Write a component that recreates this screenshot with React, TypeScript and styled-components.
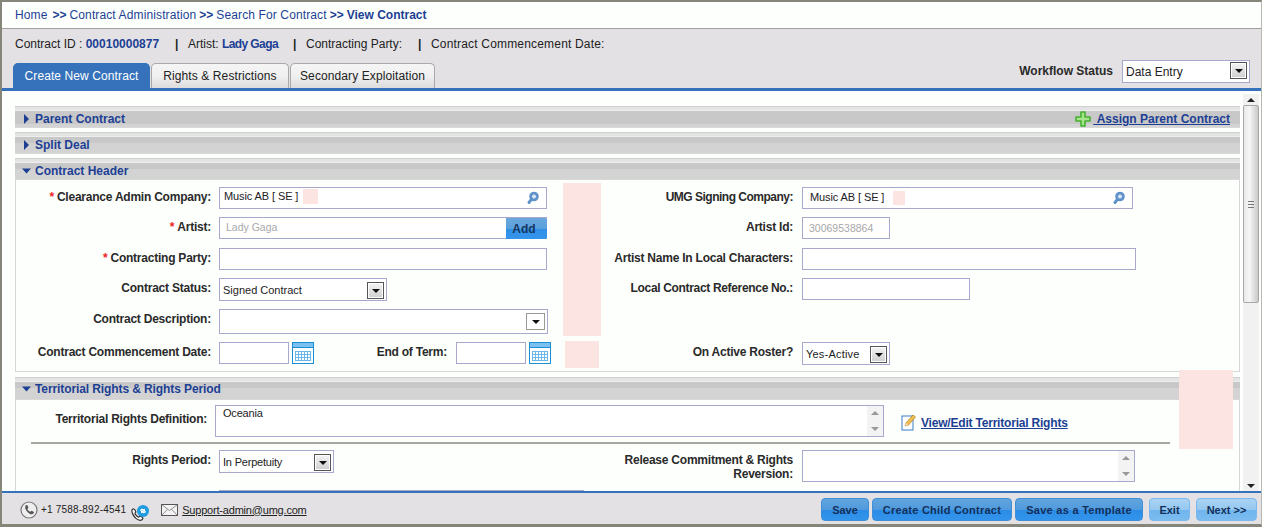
import React from "react";
import styled, { createGlobalStyle } from "styled-components";

const Global = createGlobalStyle`
  html, body { margin: 0; padding: 0; background: #fff; }
  * { box-sizing: border-box; }
  body { font-family: "Liberation Sans", Arial, sans-serif; font-size: 12px; color: #222; }
`;

const Frame = styled.div`
  position: relative;
  width: 1262px;
  height: 527px;
  display: flex;
  flex-direction: column;
  overflow: hidden;
  border-top: 2px solid #85857a;
  border-left: 2px solid #85857a;
  border-bottom: 3px solid #85857a;
  border-right: 1px solid #b8b8b0;
`;

const Breadcrumb = styled.nav`
  height: 27px;
  flex: none;
  padding: 0 0 1px 13px;
  display: flex;
  align-items: center;
  gap: 3px;
  background: #fdfffd;
  border-bottom: 1px solid #a0a0a0;
  color: #1c3f94;
  font-size: 12px;
`;

const Crumb = styled.span<{ $pr?: number }>`
  letter-spacing: 0.12px;
  padding-right: ${(p) => p.$pr ?? 0}px;
`;

const Sep = styled.b`
  font-weight: 700;
`;

const Summary = styled.div`
  flex: none;
  height: 59px;
  background: #e3e1e4;
  display: flex;
  flex-direction: column;
`;

const InfoLine = styled.div`
  height: 30px;
  flex: none;
  padding-left: 13px;
  display: flex;
  align-items: center;
  font-size: 12px;
  color: #222;
`;

const InfoItem = styled.span<{ $w: number; $ls?: number }>`
  width: ${(p) => p.$w}px;
  white-space: nowrap;
  letter-spacing: ${(p) => p.$ls ?? 0}px;
`;

const Pipe = styled.b`
  display: inline-block;
  width: 13px;
  font-weight: 700;
`;

const Strong = styled.b<{ $ls?: number }>`
  color: #1c3f94;
  font-weight: 700;
  letter-spacing: ${(p) => p.$ls ?? 0}px;
`;

const TabRow = styled.div`
  flex: 1;
  padding-left: 11px;
  display: flex;
  align-items: flex-end;
  justify-content: space-between;
`;

const Tabs = styled.div`
  display: flex;
  gap: 1px;
`;

const Tab = styled.div<{ $active?: boolean; $w: number }>`
  width: ${(p) => p.$w}px;
  height: 25px;
  border-radius: 5px 5px 0 0;
  display: flex;
  align-items: center;
  justify-content: center;
  font-size: 12px;
  letter-spacing: 0.1px;
  color: ${(p) => (p.$active ? "#fff" : "#222")};
  background: ${(p) =>
    p.$active ? "#3572bb" : "linear-gradient(#f5f5f5 0, #f0f0f0 50%, #dcdcdc 100%)"};
  border: 1px solid ${(p) => (p.$active ? "#3572bb" : "#a9a9a9")};
  border-bottom: none;
`;

const Workflow = styled.div`
  display: flex;
  align-items: flex-start;
  gap: 9px;
  height: 28px;
  margin-right: 11px;
  color: #2a2a2a;
`;

const WorkflowLabel = styled.span`
  line-height: 22px;
  font-weight: 700;
`;

const Stage = styled.div`
  flex: 1;
  min-height: 0;
  display: flex;
  border-top: 3px solid #3572bb;
  background: #fdfffd;
`;

const Scroller = styled.div`
  flex: 1;
  min-width: 0;
  overflow: hidden;
  padding: 15px 0 0 13px;
`;

const Section = styled.section<{ $mb?: number }>`
  margin-bottom: ${(p) => p.$mb ?? 4}px;
`;

const SectionHead = styled.div<{ $h?: number; $dark?: number; $pt?: number }>`
  height: ${(p) => p.$h ?? 22}px;
  padding: ${(p) => p.$pt ?? 4}px 10px 0 7px;
  display: flex;
  align-items: center;
  justify-content: space-between;
  color: #1c3f94;
  font-weight: 700;
  font-size: 12px;
  border-top: 1px solid #cfcfcf;
  border-bottom: 1px solid #d8d8d8;
  background: linear-gradient(
    #e4e4e4 0,
    #e4e4e4 3px,
    #eeeeee 3px,
    #eeeeee 4px,
    #c8c8c8 4px,
    #c8c8c8 ${(p) => p.$dark ?? 10}px,
    #d3d3d3 ${(p) => p.$dark ?? 10}px,
    #d3d3d3 100%
  );
`;

const HeadTitle = styled.span<{ $ls?: number }>`
  display: flex;
  align-items: center;
  gap: 4px;
  letter-spacing: ${(p) => p.$ls ?? 0}px;
`;

const HeadLink = styled.a`
  display: flex;
  align-items: center;
  gap: 2px;
  color: #1c3f94;
  font-weight: 700;
`;

const LinkText = styled.span`
  text-decoration: underline;
`;

const SectionBody = styled.div<{ $h?: number; $pt?: number }>`
  border-left: 1px solid #d6d6d6;
  border-right: 1px solid #d6d6d6;
  border-bottom: 1px solid #d6d6d6;
  padding-top: ${(p) => p.$pt ?? 7}px;
  display: flex;
  flex-direction: column;
  gap: 8px;
  ${(p) => (p.$h ? `height: ${p.$h}px;` : "")}
`;

const Row = styled.div<{ $h: number }>`
  display: grid;
  grid-template-columns: 564px 1fr;
  height: ${(p) => p.$h}px;
`;

const Field = styled.div<{ $gap?: number }>`
  display: flex;
  align-items: flex-start;
  gap: ${(p) => p.$gap ?? 8}px;
`;

const Label = styled.label<{ $w: number; $top?: number; $ls?: number }>`
  flex: none;
  width: ${(p) => p.$w}px;
  margin-top: ${(p) => p.$top ?? 0}px;
  text-align: right;
  font-weight: 700;
  font-size: 12px;
  letter-spacing: ${(p) => p.$ls ?? -0.23}px;
  line-height: 20px;
  color: #2a2a2a;
  white-space: nowrap;
`;

const Wrapped = styled(Label)`
  white-space: normal;
  line-height: 14px;
  padding-top: 3px;
`;

const Req = styled.span`
  color: #e22;
  margin-right: 3px;
`;

const Box = styled.div<{ $w: number; $h?: number; $fs?: number }>`
  position: relative;
  flex: none;
  width: ${(p) => p.$w}px;
  height: ${(p) => p.$h ?? 22}px;
  border: 1px solid #a8a8cc;
  background: #fff;
  display: flex;
  align-items: center;
  padding-left: 3px;
  font-size: ${(p) => p.$fs ?? 11}px;
  color: #222;
`;

const Muted = styled.span<{ $lift?: number }>`
  color: #a8a8a8;
  font-size: 10.500px;
  padding-left: 3px;
  margin-top: ${(p) => p.$lift ?? 0}px;
`;

const ValueText = styled.span<{ $pad?: number; $lift?: number; $ls?: number }>`
  padding-left: ${(p) => p.$pad ?? 0}px;
  margin-top: ${(p) => p.$lift ?? 0}px;
  letter-spacing: ${(p) => p.$ls ?? 0}px;
  white-space: nowrap;
`;

const TopText = styled.span`
  align-self: flex-start;
  padding: 1px 0 0 4px;
  letter-spacing: -0.2px;
`;

const LookupIcon = styled.svg`
  position: absolute;
  right: 6px;
  top: 3px;
`;

const AddBtn = styled.span`
  position: absolute;
  right: -1px;
  top: 0;
  bottom: -1px;
  width: 41px;
  padding-right: 5px;
  display: flex;
  align-items: center;
  justify-content: center;
  color: #14365f;
  font-weight: 700;
  font-size: 12px;
  border-radius: 0 2px 2px 0;
  background: linear-gradient(#6aa7dc 0, #5aa0de 50%, #2f90e6 52%, #3595ec 100%);
`;

const ArrowBtn = styled.span<{ $top?: number; $w?: number }>`
  position: absolute;
  right: 2px;
  top: ${(p) => p.$top ?? 3}px;
  width: ${(p) => p.$w ?? 17}px;
  height: 17px;
  border: 1px solid #555;
  box-shadow: inset 0 0 0 1px #fff;
  background: linear-gradient(#f4f4f4, #cfcfcf);
  display: flex;
  align-items: center;
  justify-content: center;
  &::after {
    content: "";
    border-left: 4px solid transparent;
    border-right: 4px solid transparent;
    border-top: 4px solid #111;
  }
`;

const PlainArrow = styled(ArrowBtn)`
  border-color: #999;
  background: #fff;
`;

const DateGroup = styled.div<{ $ml?: number }>`
  display: flex;
  gap: 3px;
  margin-left: ${(p) => p.$ml ?? 0}px;
`;

const TextBoxScroll = styled.span`
  position: absolute;
  top: 0;
  bottom: 0;
  right: 0;
  width: 16px;
  background: #f3f3f3;
  display: flex;
  flex-direction: column;
  justify-content: space-between;
  align-items: center;
  padding: 5px 0;
`;

const Tri = styled.i<{ $up?: boolean; $c?: string }>`
  display: block;
  width: 0;
  height: 0;
  border-left: 4px solid transparent;
  border-right: 4px solid transparent;
  ${(p) =>
    p.$up ? `border-bottom: 4px solid ${p.$c ?? "#999"};` : `border-top: 4px solid ${p.$c ?? "#999"};`}
`;

const TerritoryRow = styled.div`
  display: flex;
  align-items: flex-start;
  height: 32px;
`;

const EditLink = styled.a`
  margin-left: 17px;
  margin-top: 9px;
  display: flex;
  align-items: center;
  gap: 4px;
  font-size: 12px;
  letter-spacing: -0.2px;
  font-weight: 700;
  color: #1c3f94;
  text-decoration: underline;
`;

const Divider = styled.hr`
  height: 2px;
  margin: -3px 69px -2px 15px;
  border: none;
  background: #a8a8a0;
  flex: none;
`;

const ClippedField = styled.div`
  margin-left: 203px;
  width: 365px;
  height: 24px;
  flex: none;
  border: 1px solid #a8a8cc;
`;

const ScrollTrack = styled.aside`
  flex: none;
  width: 16px;
  margin: 3px 2px 0 3px;
  background: #f1f1f1;
  display: flex;
  flex-direction: column;
  align-items: center;
`;

const ScrollCap = styled.div`
  height: 11px;
  flex: none;
  display: flex;
  align-items: center;
  justify-content: center;
`;

const Thumb = styled.div`
  width: 16px;
  height: 198px;
  flex: none;
  border: 1px solid #a8a8a8;
  border-radius: 2px;
  background: linear-gradient(90deg, #e8e8e8, #f6f6f6 40%, #c9c9c9);
  display: flex;
  align-items: center;
  justify-content: center;
`;

const Grip = styled.div`
  width: 6px;
  height: 7px;
  border-top: 1px solid #777;
  border-bottom: 1px solid #777;
  position: relative;
  &::after {
    content: "";
    position: absolute;
    left: 0;
    right: 0;
    top: 2px;
    height: 1px;
    background: #777;
  }
`;

const Spacer = styled.div`
  flex: 1;
`;

const Footer = styled.footer`
  flex: none;
  height: 33px;
  border-top: 2px solid #3572bb;
  background: #e3e1e4;
  display: flex;
  align-items: center;
  justify-content: space-between;
  padding: 2px 4px 0 18px;
`;

const Contact = styled.div`
  display: flex;
  align-items: center;
  font-size: 10px;
  color: #222;
`;

const Phone = styled.span`
  margin: 0 5px 0 3px;
  letter-spacing: 0.2px;
`;

const MailGap = styled.span`
  width: 10px;
`;

const Mail = styled.a`
  margin-left: 4px;
  color: #222;
  text-decoration: underline;
  font-size: 11px;
  letter-spacing: -0.2px;
`;

const Actions = styled.div`
  display: flex;
  gap: 3px;
`;

const ActionBtn = styled.button<{ $w: number; $light?: boolean; $ml?: number; $ls?: number }>`
  width: ${(p) => p.$w}px;
  height: 23px;
  margin-left: ${(p) => p.$ml ?? 0}px;
  padding: 0;
  border-radius: 4px;
  border: 1px solid ${(p) => (p.$light ? "#7ab8ee" : "#3f8ed8")};
  background: ${(p) =>
    p.$light
      ? "linear-gradient(#a9d3f3 0, #96c8f0 50%, #6fb5ee 52%, #7bbcf0 100%)"
      : "linear-gradient(#62a5dd 0, #4f9ade 50%, #2b8ce6 52%, #3394ec 100%)"};
  color: #14305a;
  font: 700 11px "Liberation Sans", Arial, sans-serif;
  letter-spacing: ${(p) => p.$ls ?? 0}px;
`;

const Patch = styled.div<{ $x: number; $y: number; $w: number; $h: number }>`
  position: absolute;
  left: ${(p) => p.$x}px;
  top: ${(p) => p.$y}px;
  width: ${(p) => p.$w}px;
  height: ${(p) => p.$h}px;
  background: #fbe4e2;
`;

const Caret = ({ open }: { open?: boolean }) => (
  <svg width="9" height="10" viewBox="0 0 9 10" aria-hidden>
    {open ? <path d="M0 2.500h9L4.500 7.500z" fill="#1c3f94" /> : <path d="M2 0l5 5-5 5z" fill="#1c3f94" />}
  </svg>
);

const Lens = () => (
  <LookupIcon width="14" height="14" viewBox="0 0 14 14" aria-hidden>
    <circle cx="8" cy="5.500" r="3.400" fill="#dbe8f6" stroke="#5f93c9" strokeWidth="2.800" />
    <path d="M5.200 8.600L3 11.500" stroke="#5f93c9" strokeWidth="3" strokeLinecap="round" />
  </LookupIcon>
);

const Calendar = () => (
  <svg width="22" height="22" viewBox="0 0 22 22" aria-hidden>
    <rect x=".5" y=".5" width="21" height="21" fill="#fff" stroke="#1b8fd6" />
    <rect x="1" y="1" width="20" height="4" fill="#7cc0f0" />
    <rect x="1" y="5" width="20" height="1" fill="#1b8fd6" />
    <g fill="#fff" stroke="#6ab6e8" strokeWidth="1">
      {[0, 1, 2].map((r) =>
        [0, 1, 2, 3, 4].map((c) => (
          <rect key={`${r}-${c}`} x={3.5 + c * 3} y={9.5 + r * 3} width="3" height="3" />
        ))
      )}
    </g>
  </svg>
);

const Plus = () => (
  <svg width="16" height="16" viewBox="0 0 16 16" aria-hidden>
    <path
      d="M6 1h4v5h5v4h-5v5H6v-5H1V6h5z"
      fill="#a6e58c"
      stroke="#45b030"
      strokeWidth="1.600"
      strokeLinejoin="round"
    />
  </svg>
);

const EditIcon = () => (
  <svg width="16" height="17" viewBox="0 0 16 17" aria-hidden>
    <rect x="1" y="2" width="11" height="14" fill="#fff" stroke="#3a7cc4" />
    <path d="M4 12l1-3 7-8 2.500 2-7 8z" fill="#f1c04e" stroke="#b5812a" strokeWidth=".8" />
    <path d="M4 12l1-3 2.400 2z" fill="#f6e0b0" />
  </svg>
);

const PhoneIcon = () => (
  <svg width="18" height="18" viewBox="0 0 18 18" aria-hidden>
    <circle cx="9" cy="9" r="8" fill="#eee" stroke="#777" strokeWidth="1.200" />
    <path
      d="M5.500 4.500c1-.8 1.800-.5 2.200.3l.6 1.400c.2.500 0 1-.5 1.300-.3.200-.4.500-.2.900.5 1 1.200 1.700 2.100 2.200.4.200.7.100.9-.2.300-.5.800-.7 1.300-.5l1.300.7c.8.400 1 1.200.2 2-1.200 1.200-3.100.8-5.100-.9-2.400-2.100-3.900-5-2.800-6.200z"
      fill="#555"
    />
  </svg>
);

const SyncIcon = () => (
  <svg width="20" height="24" viewBox="0 0 20 24" aria-hidden>
    <path
      transform="translate(-1 5) scale(1.100)"
      d="M2 6c1.200-1 2-.6 2.500.3l.7 1.500c.2.500 0 1-.5 1.300-.3.300-.3.600 0 1 .8 1.200 1.600 2 2.700 2.600.4.200.7.100 1-.3.400-.5.900-.6 1.400-.3l1.300.8c.8.500.8 1.300 0 2.100-1.400 1.300-3.600.8-5.700-1C3 11.700 1 8 2 6z"
      fill="#fff"
      stroke="#333"
      strokeWidth="1.100"
    />
    <g transform="translate(0 6)">
      <circle cx="12" cy="7" r="6" fill="#1f9be0" />
      <path
        d="M9 6.500c.4-1.600 2.600-2.400 4-1l1-1v3h-3l1-1c-.8-.7-1.900-.4-2.200.4zM15 7.500c-.4 1.600-2.600 2.400-4 1l-1 1v-3h3l-1 1c.8.700 1.900.4 2.200-.4z"
        fill="#fff"
      />
    </g>
  </svg>
);

const MailIcon = () => (
  <svg width="17" height="12" viewBox="0 0 17 12" aria-hidden>
    <rect x=".5" y=".5" width="16" height="11" fill="#f3f3f3" stroke="#555" />
    <path d="M.5.500l8 6 8-6M.5 11.500l6-6.300M16.500 11.500l-6-6.300" fill="none" stroke="#777" strokeWidth=".8" />
  </svg>
);

const Select = ({
  w,
  h = 23,
  text,
  top,
  fs,
  ls,
}: {
  w: number;
  h?: number;
  text: string;
  top?: number;
  fs?: number;
  ls?: number;
}) => (
  <Box $w={w} $h={h} $fs={fs}>
    <ValueText $ls={ls}>{text}</ValueText>
    <ArrowBtn $top={top} />
  </Box>
);

export default function App() {
  return (
    <Frame>
      <Global />
      <Breadcrumb>
        <Crumb $pr={2}>Home</Crumb>
        <Sep>&gt;&gt;</Sep>
        <Crumb>Contract Administration</Crumb>
        <Sep>&gt;&gt;</Sep>
        <Crumb>Search For Contract</Crumb>
        <Sep>&gt;&gt;</Sep>
        <Strong>View Contract</Strong>
      </Breadcrumb>

      <Summary>
        <InfoLine>
          <InfoItem $w={160}>
            Contract ID : <Strong>00010000877</Strong>
          </InfoItem>
          <Pipe>|</Pipe>
          <InfoItem $w={105}>
            Artist: <Strong $ls={-0.6}>Lady Gaga</Strong>
          </InfoItem>
          <Pipe>|</Pipe>
          <InfoItem $w={112}>Contracting Party:</InfoItem>
          <Pipe>|</Pipe>
          <InfoItem $w={180} $ls={0.18}>
            Contract Commencement Date:
          </InfoItem>
        </InfoLine>
        <TabRow>
          <Tabs>
            <Tab $active $w={137}>
              Create New Contract
            </Tab>
            <Tab $w={138}>Rights &amp; Restrictions</Tab>
            <Tab $w={145}>Secondary Exploitation</Tab>
          </Tabs>
          <Workflow>
            <WorkflowLabel>Workflow Status</WorkflowLabel>
            <Select w={128} text="Data Entry" top={1} fs={12} />
          </Workflow>
        </TabRow>
      </Summary>

      <Stage>
        <Scroller>
          <Section>
            <SectionHead $dark={17}>
              <HeadTitle>
                <Caret />
                Parent Contract
              </HeadTitle>
              <HeadLink>
                <Plus />
                <LinkText>{"\u00a0Assign Parent Contract"}</LinkText>
              </HeadLink>
            </SectionHead>
          </Section>
          <Section>
            <SectionHead>
              <HeadTitle>
                <Caret />
                Split Deal
              </HeadTitle>
            </SectionHead>
          </Section>
          <Section $mb={5}>
            <SectionHead>
              <HeadTitle>
                <Caret open />
                Contract Header
              </HeadTitle>
            </SectionHead>
            <SectionBody $h={192}>
              <Row $h={22}>
                <Field>
                  <Label $w={195}>
                    <Req>*</Req>Clearance Admin Company:
                  </Label>
                  <Box $w={328}>
                    <ValueText $pad={1} $lift={-4} $ls={-0.1}>
                      Music AB [ SE ]
                    </ValueText>
                    <Lens />
                  </Box>
                </Field>
                <Field $gap={9}>
                  <Label $w={213} $ls={-0.5}>
                    UMG Signing Company:
                  </Label>
                  <Box $w={331}>
                    <ValueText $pad={4} $lift={-2} $ls={-0.1}>
                      Music AB [ SE ]
                    </ValueText>
                    <Lens />
                  </Box>
                </Field>
              </Row>
              <Row $h={23}>
                <Field>
                  <Label $w={195}>
                    <Req>*</Req>Artist:
                  </Label>
                  <Box $w={328}>
                    <Muted $lift={-2}>Lady Gaga</Muted>
                    <AddBtn>Add</AddBtn>
                  </Box>
                </Field>
                <Field $gap={9}>
                  <Label $w={213}>Artist Id:</Label>
                  <Box $w={88}>
                    <Muted>30069538864</Muted>
                  </Box>
                </Field>
              </Row>
              <Row $h={22}>
                <Field>
                  <Label $w={195}>
                    <Req>*</Req>Contracting Party:
                  </Label>
                  <Box $w={328} />
                </Field>
                <Field $gap={9}>
                  <Label $w={213}>Artist Name In Local Characters:</Label>
                  <Box $w={334} />
                </Field>
              </Row>
              <Row $h={23}>
                <Field>
                  <Label $w={195}>Contract Status:</Label>
                  <Select w={168} text="Signed Contract" />
                </Field>
                <Field $gap={9}>
                  <Label $w={213} $ls={-0.33}>
                    Local Contract Reference No.:
                  </Label>
                  <Box $w={168} />
                </Field>
              </Row>
              <Row $h={25}>
                <Field>
                  <Label $w={195}>Contract Description:</Label>
                  <Box $w={329} $h={25}>
                    <PlainArrow $top={3} $w={19} />
                  </Box>
                </Field>
              </Row>
              <Row $h={23}>
                <Field>
                  <Label $w={195}>Contract Commencement Date:</Label>
                  <DateGroup>
                    <Box $w={70} />
                    <Calendar />
                  </DateGroup>
                  <Label $w={125}>End of Term:</Label>
                  <DateGroup $ml={1}>
                    <Box $w={70} />
                    <Calendar />
                  </DateGroup>
                </Field>
                <Field $gap={9}>
                  <Label $w={213}>On Active Roster?</Label>
                  <Select w={88} text="Yes-Active" ls={0.2} />
                </Field>
              </Row>
            </SectionBody>
          </Section>
          <Section>
            <SectionHead $h={23} $pt={1}>
              <HeadTitle $ls={-0.1}>
                <Caret open />
                Territorial Rights &amp; Rights Period
              </HeadTitle>
            </SectionHead>
            <SectionBody $pt={5}>
              <TerritoryRow>
                <Field>
                  <Label $w={191} $top={4}>
                    Territorial Rights Definition:
                  </Label>
                  <Box $w={669} $h={32}>
                    <TopText>Oceania</TopText>
                    <TextBoxScroll>
                      <Tri $up />
                      <Tri />
                    </TextBoxScroll>
                  </Box>
                </Field>
                <EditLink>
                  <EditIcon />
                  View/Edit Territorial Rights
                </EditLink>
              </TerritoryRow>
              <Divider />
              <Row $h={32}>
                <Field>
                  <Label $w={195}>Rights Period:</Label>
                  <Select w={115} text="In Perpetuity" ls={-0.2} />
                </Field>
                <Field $gap={9}>
                  <Wrapped $w={213}>Release Commitment &amp; Rights Reversion:</Wrapped>
                  <Box $w={333} $h={32}>
                    <TextBoxScroll>
                      <Tri $up />
                      <Tri />
                    </TextBoxScroll>
                  </Box>
                </Field>
              </Row>
              <ClippedField />
            </SectionBody>
          </Section>
        </Scroller>
        <ScrollTrack>
          <ScrollCap>
            <Tri $up $c="#222" />
          </ScrollCap>
          <Thumb>
            <Grip />
          </Thumb>
          <Spacer />
          <ScrollCap>
            <Tri $c="#222" />
          </ScrollCap>
        </ScrollTrack>
      </Stage>

      <Footer>
        <Contact>
          <PhoneIcon />
          <Phone>+1 7588-892-4541</Phone>
          <SyncIcon />
          <MailGap />
          <MailIcon />
          <Mail>Support-admin@umg.com</Mail>
        </Contact>
        <Actions>
          <ActionBtn $w={48}>Save</ActionBtn>
          <ActionBtn $w={140} $ls={0.25}>
            Create Child Contract
          </ActionBtn>
          <ActionBtn $w={128} $ls={0.28}>
            Save as a Template
          </ActionBtn>
          <ActionBtn $w={41} $light $ml={3}>
            Exit
          </ActionBtn>
          <ActionBtn $w={61} $light $ml={3}>
            Next &gt;&gt;
          </ActionBtn>
        </Actions>
      </Footer>

      <Patch $x={301} $y={187} $w={15} $h={15} />
      <Patch $x={891} $y={189} $w={12} $h={14} />
      <Patch $x={561} $y={181} $w={38} $h={153} />
      <Patch $x={563} $y={339} $w={34} $h={27} />
      <Patch $x={1177} $y={368} $w={54} $h={79} />
    </Frame>
  );
}
